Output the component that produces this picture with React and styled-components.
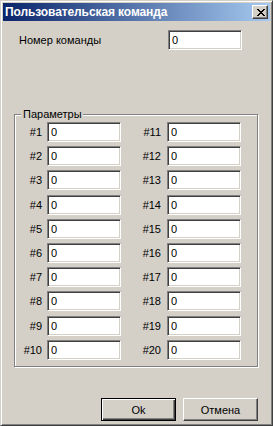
import React from 'react'
import styled, { createGlobalStyle } from 'styled-components'

const GlobalStyle = createGlobalStyle`
  html, body {
    margin: 0;
    padding: 0;
    background: #d4d0c8;
  }
  * {
    box-sizing: border-box;
  }
`

const App = () => {
  const rows = Array.from({ length: 10 }, (_, i) => i + 1)

  return (
    <>
      <GlobalStyle />
      <Window>
        <TitleBar>
          <TitleText>Пользовательская команда</TitleText>
          <CloseButton>
            <svg width="8" height="7" viewBox="0 0 8 7">
              <path
                d="M0 0h2v1h1v1h2v-1h1v-1h2v1h-1v1h-1v1h-1v1h1v1h1v1h1v1h-2v-1h-1v-1h-2v1h-1v1h-2v-1h1v-1h1v-1h1v-1h-1v-1h-1v-1h-1z"
                fill="#000"
              />
            </svg>
          </CloseButton>
        </TitleBar>

        <Body>
          <NumberRow>
            <Label>Номер команды</Label>
            <Field>0</Field>
          </NumberRow>

          <GroupBox>
            <Legend>Параметры</Legend>
            <ParamGrid>
              {rows.map((n) => (
                <React.Fragment key={n}>
                  <ParamLabel>#{n}</ParamLabel>
                  <Field>0</Field>
                  <ParamLabel wide>#{n + 10}</ParamLabel>
                  <Field>0</Field>
                </React.Fragment>
              ))}
            </ParamGrid>
          </GroupBox>

          <ButtonRow>
            <Button primary>Ok</Button>
            <Button>Отмена</Button>
          </ButtonRow>
        </Body>
      </Window>
    </>
  )
}

export default App

const Window = styled.div`
  width: 273px;
  height: 426px;
  display: flex;
  flex-direction: column;
  padding: 2px;
  background: #d4d0c8;
  border: 1px solid;
  border-color: #d4d0c8 #404040 #404040 #d4d0c8;
  box-shadow: inset 1px 1px #ffffff, inset -1px -1px #808080;
  font-family: 'Liberation Sans', Arial, sans-serif;
  font-size: 11px;
  color: #000000;
`

const TitleBar = styled.div`
  height: 18px;
  display: flex;
  align-items: center;
  justify-content: space-between;
  padding: 0 2px 0 2px;
  background: linear-gradient(to right, #0a246a, #a6caf0);
`

const TitleText = styled.span`
  color: #ffffff;
  font-weight: bold;
  font-size: 12px;
  letter-spacing: -0.1px;
  white-space: nowrap;
`

const CloseButton = styled.div`
  width: 16px;
  height: 14px;
  display: flex;
  align-items: center;
  justify-content: center;
  background: #d4d0c8;
  border: 1px solid;
  border-color: #ffffff #404040 #404040 #ffffff;
  box-shadow: inset -1px -1px #808080;
  padding-left: 1px;
`

const Body = styled.div`
  flex: 1;
  display: flex;
  flex-direction: column;
  padding: 9px 12px 2px 11px;
`

const NumberRow = styled.div`
  display: flex;
  align-items: center;
  padding-left: 5px;
`

const Label = styled.span`
  width: 149px;
`

const Field = styled.div`
  width: 74px;
  height: 20px;
  display: flex;
  align-items: center;
  padding-left: 3px;
  background: #ffffff;
  border: 1px solid;
  border-color: #808080 #ffffff #ffffff #808080;
  box-shadow: inset 1px 1px #404040, inset -1px -1px #d4d0c8;
`

const GroupBox = styled.div`
  position: relative;
  margin-top: 64px;
  width: 244px;
  height: 253px;
  border: 1px solid #808080;
  box-shadow: inset 1px 1px #ffffff, 1px 1px 0 #ffffff;
  padding-top: 7px;
`

const Legend = styled.span`
  position: absolute;
  top: -8px;
  left: 6px;
  padding: 0 1px 0 2px;
  line-height: 14px;
  background: #d4d0c8;
`

const ParamGrid = styled.div`
  display: grid;
  grid-template-columns: 32px 74px 46px 74px;
  row-gap: 4.2px;
  align-items: center;
`

const ParamLabel = styled.span`
  text-align: right;
  padding-right: ${(p) => (p.wide ? '6px' : '5px')};
`

const ButtonRow = styled.div`
  margin-top: auto;
  display: flex;
  justify-content: flex-end;
  gap: 7px;
`

const Button = styled.div`
  width: 75px;
  height: 23px;
  display: flex;
  align-items: center;
  justify-content: center;
  background: #d4d0c8;
  border: 1px solid;
  border-color: ${(p) =>
    p.primary ? '#000000' : '#ffffff #404040 #404040 #ffffff'};
  box-shadow: ${(p) =>
    p.primary
      ? 'inset 1px 1px #ffffff, inset -1px -1px #404040, inset -2px -2px #808080'
      : 'inset -1px -1px #808080'};
`
